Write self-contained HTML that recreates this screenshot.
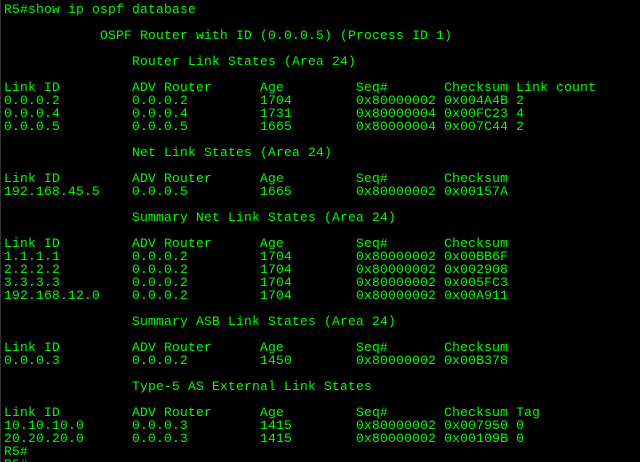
<!DOCTYPE html>
<html><head><meta charset="utf-8"><style>
html,body{margin:0;padding:0;background:#000;width:640px;height:462px;overflow:hidden}
pre{margin:0;padding:3px 0 0 4px;font-family:"Liberation Mono",monospace;font-size:13px;letter-spacing:0.2px;line-height:13px;color:#00ff00;white-space:pre}
.edge{position:absolute;left:0;top:0;width:1px;height:462px;background:#333}
</style></head><body><div class="edge"></div><pre>R5#show ip ospf database

            OSPF Router with ID (0.0.0.5) (Process ID 1)

                Router Link States (Area 24)

Link ID         ADV Router      Age         Seq#       Checksum Link count
0.0.0.2         0.0.0.2         1704        0x80000002 0x004A4B 2
0.0.0.4         0.0.0.4         1731        0x80000004 0x00FC23 4
0.0.0.5         0.0.0.5         1665        0x80000004 0x007C44 2

                Net Link States (Area 24)

Link ID         ADV Router      Age         Seq#       Checksum
192.168.45.5    0.0.0.5         1665        0x80000002 0x00157A

                Summary Net Link States (Area 24)

Link ID         ADV Router      Age         Seq#       Checksum
1.1.1.1         0.0.0.2         1704        0x80000002 0x00BB6F
2.2.2.2         0.0.0.2         1704        0x80000002 0x002908
3.3.3.3         0.0.0.2         1704        0x80000002 0x005FC3
192.168.12.0    0.0.0.2         1704        0x80000002 0x00A911

                Summary ASB Link States (Area 24)

Link ID         ADV Router      Age         Seq#       Checksum
0.0.0.3         0.0.0.2         1450        0x80000002 0x00B378

                Type-5 AS External Link States

Link ID         ADV Router      Age         Seq#       Checksum Tag
10.10.10.0      0.0.0.3         1415        0x80000002 0x007950 0
20.20.20.0      0.0.0.3         1415        0x80000002 0x00109B 0
R5#
R5#</pre></body></html>
